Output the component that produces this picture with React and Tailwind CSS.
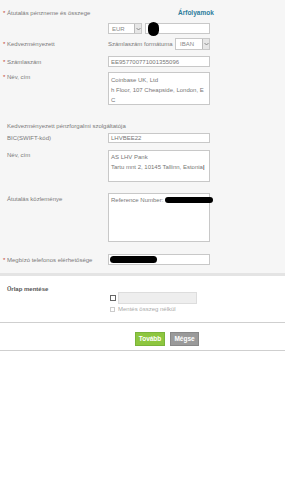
function Label({ star, children }) {
  return (
    <div className="flex w-[108px] shrink-0 pl-[3px]">
      <span className="w-[4px] text-[#c0392b]">{star ? '*' : ''}</span>
      <span className="text-[#7a7a7a]">{children}</span>
    </div>
  )
}

function Chevron() {
  return (
    <div className="flex h-full w-[7px] items-center justify-center border-l border-[#bbb] bg-[#e6e6e6]">
      <svg width="5" height="4" viewBox="0 0 5 4">
        <path d="M0.5 1 L2.5 3 L4.5 1" fill="none" stroke="#777" strokeWidth="0.8" />
      </svg>
    </div>
  )
}

export default function App() {
  return (
    <div className="flex h-[480px] w-[285px] flex-col bg-white text-[6px] leading-[8px]" style={{ fontFamily: '"Liberation Sans", Arial, sans-serif' }}>
      <div className="flex flex-col bg-[#f6f6f6] pb-[8px]">
        <div className="mt-[7px] flex h-[12px] items-center">
          <Label star>Átutalás pénzneme és összege</Label>
          <span className="ml-[70px] text-[6.5px] font-bold text-[#2b7c9c]">Árfolyamok</span>
        </div>

        <div className="mt-[4px] flex h-[11px]">
          <div className="w-[108px] shrink-0" />
          <div className="flex w-[34px] items-center justify-between border border-[#c8c8c8] bg-white pl-[3px]">
            <span className="text-[#888]">EUR</span>
            <Chevron />
          </div>
          <div className="relative ml-[3px] w-[65px] border border-[#c8c8c8] bg-white">
            <div className="absolute left-[2px] top-[-2px] h-[14px] w-[11px] rounded-full bg-black" />
          </div>
        </div>

        <div className="mt-[4px] flex h-[12px] items-center">
          <Label star>Kedvezményezett</Label>
          <span className="w-[67px] text-[#7a7a7a]">Számlaszám formátuma</span>
          <div className="flex h-full w-[35px] items-center justify-between border border-[#c8c8c8] bg-white pl-[4px]">
            <span className="text-[#888]">IBAN</span>
            <Chevron />
          </div>
        </div>

        <div className="mt-[6px] flex h-[11px] items-center">
          <Label star>Számlaszám</Label>
          <div className="flex h-full w-[102px] items-center border border-[#c8c8c8] bg-white pl-[2px] text-[#777]">EE957700771001355096</div>
        </div>

        <div className="mt-[5px] flex h-[33px]">
          <div className="pt-[1px]"><Label star>Név, cím</Label></div>
          <div className="w-[102px] border border-[#c8c8c8] bg-white px-[2px] pt-[2px] leading-[10px] text-[#777]">
            <div>Coinbase UK, Ltd</div>
            <div>h Floor, 107 Cheapside, London, E</div>
            <div>C</div>
          </div>
        </div>

        <div className="mt-[17px] h-[8px] pl-[7px] text-[#7a7a7a]">Kedvezményezett pénzforgalmi szolgáltatója</div>

        <div className="mt-[3px] flex h-[10px] items-center">
          <Label>BIC(SWIFT-kód)</Label>
          <div className="flex h-full w-[102px] items-center border border-[#c8c8c8] bg-white pl-[2px] text-[#777]">LHVBEE22</div>
        </div>

        <div className="mt-[7px] flex h-[32px]">
          <div className="pt-[1px]"><Label>Név, cím</Label></div>
          <div className="w-[102px] border border-[#c8c8c8] bg-white px-[2px] pt-[1px] leading-[10px] text-[#777]">
            <div>AS LHV Pank</div>
            <div>Tartu mnt 2, 10145 Tallinn, Estonia<span className="text-black">|</span></div>
          </div>
        </div>

        <div className="mt-[11px] flex h-[49px]">
          <div className="pt-[2px]"><Label>Átutalás közleménye</Label></div>
          <div className="relative w-[102px] border border-[#c8c8c8] bg-white px-[2px] pt-[2px] text-[#777]">
            <span>Reference Number:</span>
            <div className="absolute left-[56px] top-[3px] h-[6px] w-[48px] rounded-full bg-black" />
          </div>
        </div>

        <div className="mt-[12px] flex h-[11px] items-center">
          <Label star>Megbízó telefonos elérhetősége</Label>
          <div className="relative h-full w-[102px] border border-[#c8c8c8] bg-white">
            <div className="absolute left-[1px] top-[1px] h-[7px] w-[47px] rounded-full bg-black" />
          </div>
        </div>
      </div>

      <div className="h-[3px] bg-[#e4e4e4]" />

      <div className="mt-[9px] flex h-[7px] items-center pl-[7px] text-[6px] font-bold text-[#555]">Űrlap mentése</div>

      <div className="flex h-[12px] items-center pl-[110px]">
        <div className="h-[6px] w-[6px] border border-[#666] bg-white" />
        <div className="ml-[2px] h-full w-[79px] border border-[#ddd] bg-[#eeeeee]" />
      </div>
      <div className="mt-[2px] flex h-[6px] items-center pl-[110px]">
        <div className="h-[5px] w-[5px] border border-[#ccc] bg-white" />
        <span className="ml-[3px] text-[#aaa]">Mentés összeg nélkül</span>
      </div>

      <div className="mt-[10px] h-px bg-[#cfcfcf]" />

      <div className="mt-[9px] flex h-[14px] pl-[135px]">
        <div className="flex w-[30px] items-center justify-center border border-[#7ab33a] bg-[#8dc63f] text-[6.5px] font-bold text-white">Tovább</div>
        <div className="ml-[5px] flex w-[29px] items-center justify-center border border-[#888] bg-[#9a9a9a] text-[6.5px] font-bold text-white">Mégse</div>
      </div>

      <div className="mt-[4px] h-px bg-[#cfcfcf]" />
    </div>
  )
}
